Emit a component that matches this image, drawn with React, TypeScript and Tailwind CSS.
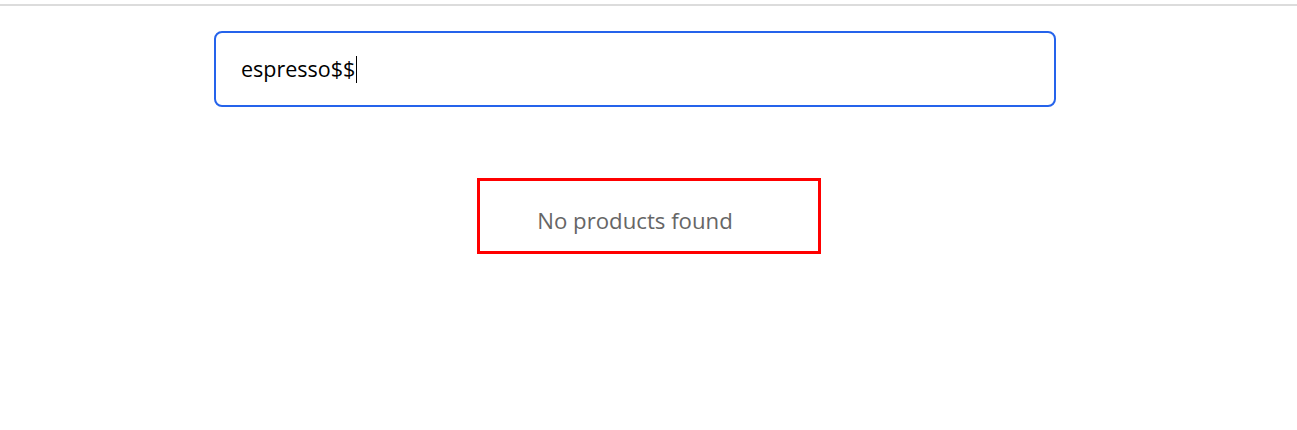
export default function App() {
  return (
    <div className="relative min-h-[430px] bg-white" style={{ fontFamily: '"Open Sans", "Noto Sans", sans-serif' }}>
      <div className="h-[6px] border-b-2 border-[#dcdcdc]" />
      <div className="ml-[214px] w-[842px] pt-[25px]">
        <div className="flex h-[76px] items-center rounded-lg border-2 border-[#2563eb] pl-[25px]">
          <span className="text-[21.5px] leading-[30px] text-black">espresso$$</span>
          <span className="ml-[1px] h-[27px] w-px bg-black" />
        </div>
        <div className="mt-[99px] flex justify-center">
          <p className="text-[22.2px] leading-[30px] text-[#666666]">No products found</p>
        </div>
      </div>
      <div className="absolute left-[477px] top-[178px] h-[76px] w-[344px] border-[3px] border-[#ff0000]" />
    </div>
  );
}
